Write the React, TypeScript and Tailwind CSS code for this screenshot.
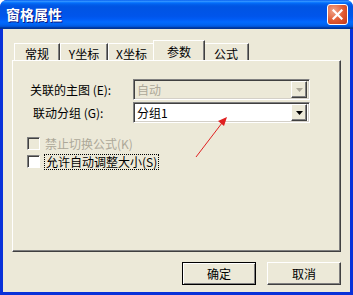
import React from "react";

const font = { fontFamily: '"Noto Sans CJK SC", "Liberation Sans", sans-serif' };

function Check({ disabled, label }: { disabled?: boolean; label: string }) {
  return (
    <div className="flex items-center h-[15px]">
      <div
        className={
          "w-[13px] h-[13px] border-t border-l border-[#808080] shadow-[inset_1px_1px_0_#404040] " +
          (disabled ? "bg-[#ECE9D8]" : "bg-white")
        }
        style={{ borderRight: "1px solid #fff", borderBottom: "1px solid #fff" }}
      />
      <span
        className={
          "ml-[4px] text-[12px] leading-[14px] px-[1px] " +
          (disabled ? "text-[#ACA899]" : "text-black border border-dotted border-black")
        }
      >
        {label}
      </span>
    </div>
  );
}

function Combo({ text, disabled }: { text: string; disabled?: boolean }) {
  return (
    <div
      className={
        "w-[177px] h-[21px] flex items-center border-t border-l border-[#808080] " +
        (disabled ? "bg-[#ECE9D8]" : "bg-white")
      }
      style={{ borderRight: "1px solid #fff", borderBottom: "1px solid #fff", boxShadow: "inset 1px 1px 0 #404040, inset -1px -1px 0 #D4D0C8" }}
    >
      <span className={"flex-1 pl-[3px] text-[12px] " + (disabled ? "text-[#ACA899]" : "text-black")}>{text}</span>
      <div
        className="w-[16px] h-[17px] mr-[2px] flex items-center justify-center bg-[#ECE9D8]"
        style={{ borderTop: "1px solid #fff", borderLeft: "1px solid #fff", borderRight: "1px solid #404040", borderBottom: "1px solid #404040", boxShadow: "inset -1px -1px 0 #808080" }}
      >
        <svg width="7" height="4" viewBox="0 0 7 4">
          <path d="M0 0h7L3.5 4z" fill={disabled ? "#ACA899" : "#000"} />
        </svg>
      </div>
    </div>
  );
}

function Tab({ label, selected, w }: { label: string; selected?: boolean; w: string }) {
  return (
    <div
      className={
        "flex items-start justify-center text-[12px] text-black bg-[#ECE9D8] " +
        w +
        (selected ? " h-[20px] pt-[2px] relative z-10 -mx-[2px]" : " h-[17px] mt-[2px] pt-[1px]")
      }
      style={{ borderTop: "1px solid #fff", borderLeft: "1px solid #fff", borderRight: "1px solid #404040", boxShadow: "inset -1px 0 0 #808080" }}
    >
      {label}
    </div>
  );
}

export default function App() {
  return (
    <div className="w-[353px] h-[295px] flex flex-col bg-[#0831D9] rounded-t-[7px] overflow-hidden relative" style={font}>
      <div className="h-[29px] flex items-center justify-between pl-[6px] pr-[5px] bg-[linear-gradient(#0058ee_0%,#3593ff_4%,#288eff_6%,#127dff_8%,#036ffc_10%,#0262ee_14%,#0057e5_20%,#0054e3_24%,#0055eb_56%,#005bf5_66%,#026afe_76%,#0062ef_86%,#0052d6_92%,#0040ab_94%,#003092_100%)]">
        <span className="text-white font-bold text-[14px] [text-shadow:1px_1px_0_#0a1883]">窗格属性</span>
        <div className="w-[21px] h-[21px] rounded-[3px] border border-white flex items-center justify-center bg-[radial-gradient(circle_at_30%_30%,#f0a48a,#e0582f_55%,#c2381a)]">
          <svg width="11" height="11" viewBox="0 0 11 11">
            <path d="M1.5 1.5l8 8M9.5 1.5l-8 8" stroke="#fff" strokeWidth="2.2" strokeLinecap="square" />
          </svg>
        </div>
      </div>
      <div className="flex-1 mx-[3px] mb-[3px] bg-[#ECE9D8] flex flex-col">
        <div className="ml-[11px] mt-[11px] flex items-end h-[20px]">
          <Tab label="常规" w="w-[46px]" />
          <Tab label="Y坐标" w="w-[48px]" />
          <Tab label="X坐标" w="w-[47px]" />
          <Tab label="参数" w="w-[52px]" selected />
          <Tab label="公式" w="w-[46px]" />
        </div>
        <div
          className="ml-[9px] w-[329px] h-[192px] bg-[#ECE9D8] flex flex-col"
          style={{ borderTop: "1px solid #fff", borderLeft: "1px solid #fff", borderRight: "1px solid #404040", borderBottom: "1px solid #404040", boxShadow: "inset -1px -1px 0 #808080" }}
        >
          <div className="flex items-center mt-[18px] h-[21px]">
            <span className="ml-[17px] w-[103px] text-[12px] text-black">关联的主图 (E):</span>
            <Combo text="自动" disabled />
          </div>
          <div className="flex items-center mt-[2px] h-[21px]">
            <span className="ml-[20px] w-[100px] text-[12px] text-black">联动分组 (G):</span>
            <Combo text="分组1" />
          </div>
          <div className="ml-[14px] mt-[13px] flex flex-col gap-[3px]">
            <Check disabled label="禁止切换公式(K)" />
            <Check label="允许自动调整大小(S)" />
          </div>
        </div>
        <div className="flex justify-end gap-[11px] mt-[10px] mr-[9px]">
          <div className="w-[74px] h-[23px] border border-black flex items-center justify-center text-[12px] text-black bg-[#ECE9D8]" style={{ boxShadow: "inset 1px 1px 0 #fff, inset -1px -1px 0 #808080" }}>
            确定
          </div>
          <div className="w-[74px] h-[23px] flex items-center justify-center text-[12px] text-black bg-[#ECE9D8]" style={{ borderTop: "1px solid #fff", borderLeft: "1px solid #fff", borderRight: "1px solid #404040", borderBottom: "1px solid #404040", boxShadow: "inset -1px -1px 0 #808080" }}>
            取消
          </div>
        </div>
      </div>
      <svg className="absolute left-0 top-0 pointer-events-none" width="353" height="295">
        <line x1="196" y1="157" x2="222" y2="123" stroke="#e02020" strokeWidth="1" />
        <path d="M227 117 L218 121 L224 126 Z" fill="#e02020" />
      </svg>
    </div>
  );
}
